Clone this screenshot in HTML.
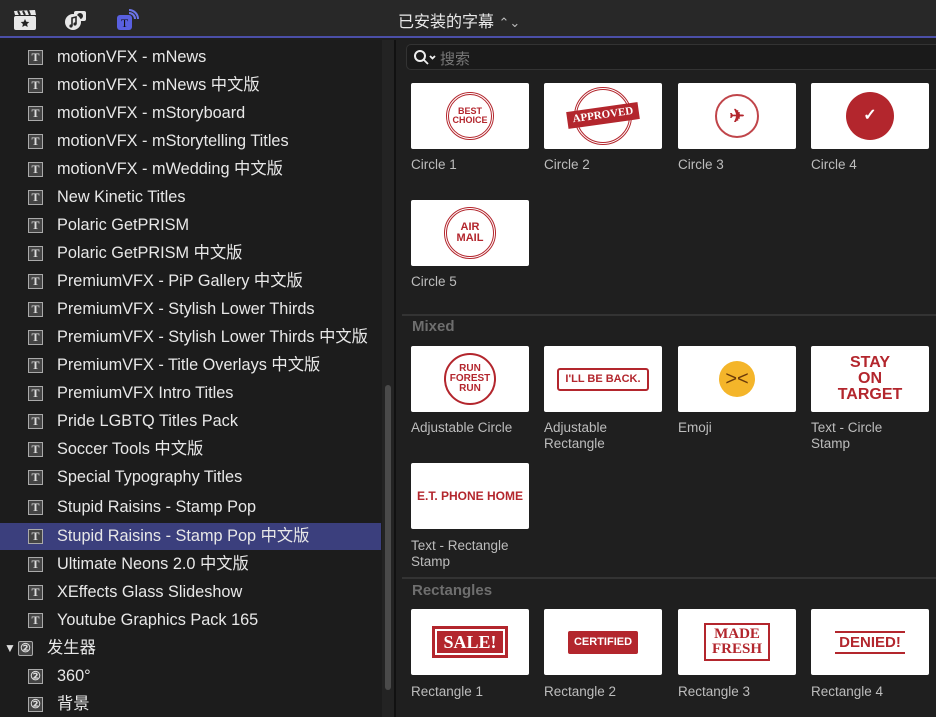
<!DOCTYPE html>
<html style="width:936px;height:717px;overflow:hidden"><head><meta charset="utf-8"><style>
*{margin:0;padding:0;box-sizing:border-box}
body{width:936px;height:717px;background:#1e1e1e;font-family:"Liberation Sans","Noto Sans CJK SC",sans-serif;overflow:hidden;position:relative;color:#e6e6e6}
#top{position:absolute;left:0;top:0;width:936px;height:38px;background:#282828;border-bottom:2px solid #4b4fa8}
#title{position:absolute;left:398px;top:8px;font-size:16px;color:#e8e8e8}
#left{position:absolute;left:0;top:40px;width:382px;height:677px;background:#1c1c1c;overflow:hidden}
.row{position:absolute;left:0;width:381px;height:26px;font-size:16.3px;line-height:26px;color:#e8e8e8}
.row .ic{position:absolute;left:28px;top:6px;width:15px;height:15px;border:1px solid #aaa;background:#444;color:#ddd;font:bold 12px "Liberation Serif",serif;text-align:center;line-height:13px}
.row .tx{position:absolute;left:57px;top:0;white-space:nowrap}
.sel{background:#3b3f7d}
#sb{position:absolute;left:382px;top:40px;width:12px;height:677px;background:#232323}
#thumb{position:absolute;left:3px;top:345px;width:6px;height:305px;background:#4a4a4a;border-radius:3px}
#div{position:absolute;left:394px;top:40px;width:2px;height:677px;background:#111}
#right{position:absolute;left:396px;top:40px;width:540px;height:677px;background:#1f1f1f}
#search{position:absolute;left:406px;top:44px;width:530px;height:26px;background:#1a1a1a;border:1px solid #333;border-right:none;border-radius:5px 0 0 5px}
#search span{position:absolute;left:33px;top:3px;font-size:15px;color:#777}
.th{position:absolute;width:118px;height:66px;background:#fff;border-radius:2px;overflow:hidden;display:flex;align-items:center;justify-content:center}
.lb{position:absolute;font-size:13.5px;color:#bdbdbd;line-height:16px;width:125px}
.sec{position:absolute;left:412px;font-size:15px;font-weight:bold;color:#6e6e6e}
.hr{position:absolute;left:402px;width:534px;height:2px;background:#333}
.red{color:#b3262d;font-family:"Liberation Sans",sans-serif;font-weight:bold;text-align:center;line-height:1}
</style></head><body>
<div id="top">
<svg style="position:absolute;left:13px;top:9px" width="24" height="22" viewBox="0 0 24 22"><rect x="1" y="7" width="22" height="14" rx="2" fill="#e8e8e8"/><path d="M1 2l21-1 1 5H2z" fill="#e8e8e8"/><path d="M5 2l2 4M10 2l2 4M15 1l2 5" stroke="#282828" stroke-width="2"/><path d="M12 10l1.3 2.7 3 .3-2.2 2 .6 3-2.7-1.5-2.7 1.5.6-3-2.2-2 3-.3z" fill="#222"/></svg>
<svg style="position:absolute;left:64px;top:8px" width="24" height="24" viewBox="0 0 24 24"><rect x="10" y="3" width="12" height="10" rx="2" fill="#e8e8e8"/><circle cx="16" cy="8" r="3" fill="#282828"/><circle cx="9" cy="14" r="8" fill="#e8e8e8"/><path d="M8 18V10l4-1v7" stroke="#282828" stroke-width="1.6" fill="none"/><circle cx="7" cy="18" r="1.6" fill="#282828"/><circle cx="11" cy="16" r="1.6" fill="#282828"/></svg>
<svg style="position:absolute;left:115px;top:8px" width="26" height="24" viewBox="0 0 26 24"><path d="M14 2a9 9 0 0 1 9 9M14 5a6 6 0 0 1 6 6" stroke="#6b74e8" stroke-width="2" fill="none"/><rect x="2" y="7" width="15" height="15" rx="3" fill="#5960e0"/><text x="9.5" y="19" font-family="Liberation Serif" font-size="12" fill="#111" text-anchor="middle">T</text></svg>
<div id="title">已安装的字幕 <span style="font-size:13px;color:#bbb">&#8963;&#8964;</span></div>
</div>
<div id="left">
<div class="row" style="top:4px"><div class="ic">T</div><div class="tx">motionVFX - mNews</div></div>
<div class="row" style="top:32px"><div class="ic">T</div><div class="tx">motionVFX - mNews 中文版</div></div>
<div class="row" style="top:60px"><div class="ic">T</div><div class="tx">motionVFX - mStoryboard</div></div>
<div class="row" style="top:88px"><div class="ic">T</div><div class="tx">motionVFX - mStorytelling Titles</div></div>
<div class="row" style="top:116px"><div class="ic">T</div><div class="tx">motionVFX - mWedding 中文版</div></div>
<div class="row" style="top:144px"><div class="ic">T</div><div class="tx">New Kinetic Titles</div></div>
<div class="row" style="top:172px"><div class="ic">T</div><div class="tx">Polaric GetPRISM</div></div>
<div class="row" style="top:200px"><div class="ic">T</div><div class="tx">Polaric GetPRISM 中文版</div></div>
<div class="row" style="top:228px"><div class="ic">T</div><div class="tx">PremiumVFX - PiP Gallery 中文版</div></div>
<div class="row" style="top:256px"><div class="ic">T</div><div class="tx">PremiumVFX - Stylish Lower Thirds</div></div>
<div class="row" style="top:284px"><div class="ic">T</div><div class="tx">PremiumVFX - Stylish Lower Thirds 中文版</div></div>
<div class="row" style="top:312px"><div class="ic">T</div><div class="tx">PremiumVFX - Title Overlays 中文版</div></div>
<div class="row" style="top:340px"><div class="ic">T</div><div class="tx">PremiumVFX Intro Titles</div></div>
<div class="row" style="top:368px"><div class="ic">T</div><div class="tx">Pride LGBTQ Titles Pack</div></div>
<div class="row" style="top:396px"><div class="ic">T</div><div class="tx">Soccer Tools 中文版</div></div>
<div class="row" style="top:424px"><div class="ic">T</div><div class="tx">Special Typography Titles</div></div>
<div class="row" style="top:454px"><div class="ic">T</div><div class="tx">Stupid Raisins - Stamp Pop</div></div>
<div class="row sel" style="top:483px;height:27px"><div class="ic">T</div><div class="tx">Stupid Raisins - Stamp Pop 中文版</div></div>
<div class="row" style="top:511px"><div class="ic">T</div><div class="tx">Ultimate Neons 2.0 中文版</div></div>
<div class="row" style="top:539px"><div class="ic">T</div><div class="tx">XEffects Glass Slideshow</div></div>
<div class="row" style="top:567px"><div class="ic">T</div><div class="tx">Youtube Graphics Pack 165</div></div>
<div class="row" style="top:595px"><span style="position:absolute;left:4px;font-size:12px;color:#ddd">▼</span><div class="ic" style="left:18px;border-radius:2px">②</div><div class="tx" style="left:47px">发生器</div></div>
<div class="row" style="top:623px"><div class="ic">②</div><div class="tx">360°</div></div>
<div class="row" style="top:651px"><div class="ic">②</div><div class="tx">背景</div></div>
</div>
<div id="sb"><div id="thumb"></div></div>
<div id="div"></div>
<div id="right"></div>
<div id="search"><svg style="position:absolute;left:6px;top:4px" width="24" height="18" viewBox="0 0 24 18"><circle cx="7" cy="7" r="5" stroke="#eee" stroke-width="2" fill="none"/><path d="M11 11l4 4M17 7l2.5 2.5L22 7" stroke="#eee" stroke-width="1.8" fill="none"/></svg><span>搜索</span></div>

<div class="th" style="left:411px;top:83px"><div class="red" style="width:48px;height:48px;border:3px double #b3262d;border-radius:50%;display:flex;align-items:center;justify-content:center;font-size:9px">BEST<br>CHOICE</div></div>
<div class="th" style="left:544px;top:83px"><div style="position:relative;width:58px;height:58px;border:3px double #b3262d;border-radius:50%"><div class="red" style="position:absolute;left:-10px;top:17px;width:72px;background:#b3262d;color:#fff;font-size:11px;padding:3px 0;transform:rotate(-8deg);font-family:'Liberation Serif',serif">APPROVED</div></div></div>
<div class="th" style="left:678px;top:83px"><div class="red" style="width:44px;height:44px;border:2px solid #c0454a;border-radius:50%;display:flex;align-items:center;justify-content:center;font-size:18px">✈</div></div>
<div class="th" style="left:811px;top:83px"><div class="red" style="width:48px;height:48px;background:#b3262d;border-radius:50%;display:flex;align-items:center;justify-content:center;color:#fff;font-size:16px;border:3px dotted #b3262d">✓</div></div>
<div class="lb" style="left:411px;top:157px">Circle 1</div>
<div class="lb" style="left:544px;top:157px">Circle 2</div>
<div class="lb" style="left:678px;top:157px">Circle 3</div>
<div class="lb" style="left:811px;top:157px">Circle 4</div>
<div class="th" style="left:411px;top:200px"><div class="red" style="width:52px;height:52px;border:3px double #b3262d;border-radius:50%;display:flex;align-items:center;justify-content:center;font-size:11px">AIR MAIL</div></div>
<div class="lb" style="left:411px;top:274px">Circle 5</div>

<div class="hr" style="top:314px"></div>
<div class="sec" style="top:318px">Mixed</div>
<div class="th" style="left:411px;top:346px"><div class="red" style="width:52px;height:52px;border:2px solid #b3262d;border-radius:50%;display:flex;align-items:center;justify-content:center;font-size:10px">RUN<br>FOREST<br>RUN</div></div>
<div class="th" style="left:544px;top:346px"><div class="red" style="border:2px solid #b3262d;border-radius:3px;padding:4px 6px;font-size:11px">I'LL BE BACK.</div></div>
<div class="th" style="left:678px;top:346px"><div style="width:36px;height:36px;border-radius:50%;background:#f4b52a;font-size:20px;text-align:center;line-height:36px;color:#6b3a0a">&gt;&lt;</div></div>
<div class="th" style="left:811px;top:346px"><div class="red" style="font-size:16px;line-height:16px">STAY<br>ON<br>TARGET</div></div>
<div class="lb" style="left:411px;top:420px">Adjustable Circle</div>
<div class="lb" style="left:544px;top:420px">Adjustable<br>Rectangle</div>
<div class="lb" style="left:678px;top:420px">Emoji</div>
<div class="lb" style="left:811px;top:420px">Text - Circle<br>Stamp</div>
<div class="th" style="left:411px;top:463px"><div class="red" style="font-size:12px">E.T. PHONE HOME</div></div>
<div class="lb" style="left:411px;top:538px">Text - Rectangle<br>Stamp</div>

<div class="hr" style="top:577px"></div>
<div class="sec" style="top:582px">Rectangles</div>
<div class="th" style="left:411px;top:609px"><div class="red" style="border:3px solid #b3262d;padding:2px;"><div style="background:#b3262d;color:#fff;font-size:18px;padding:2px 6px;font-family:'Liberation Serif',serif">SALE!</div></div></div>
<div class="th" style="left:544px;top:609px"><div class="red" style="background:#b3262d;color:#fff;font-size:11px;padding:6px 6px;border-radius:2px">CERTIFIED</div></div>
<div class="th" style="left:678px;top:609px"><div class="red" style="border:2px solid #b3262d;padding:2px 6px;font-size:15px;line-height:15px;font-family:'Liberation Serif',serif">MADE<br>FRESH</div></div>
<div class="th" style="left:811px;top:609px"><div class="red" style="border-top:2px solid #b3262d;border-bottom:2px solid #b3262d;padding:2px 4px;font-size:15px">DENIED!</div></div>
<div class="lb" style="left:411px;top:684px">Rectangle 1</div>
<div class="lb" style="left:544px;top:684px">Rectangle 2</div>
<div class="lb" style="left:678px;top:684px">Rectangle 3</div>
<div class="lb" style="left:811px;top:684px">Rectangle 4</div>
</body></html>
